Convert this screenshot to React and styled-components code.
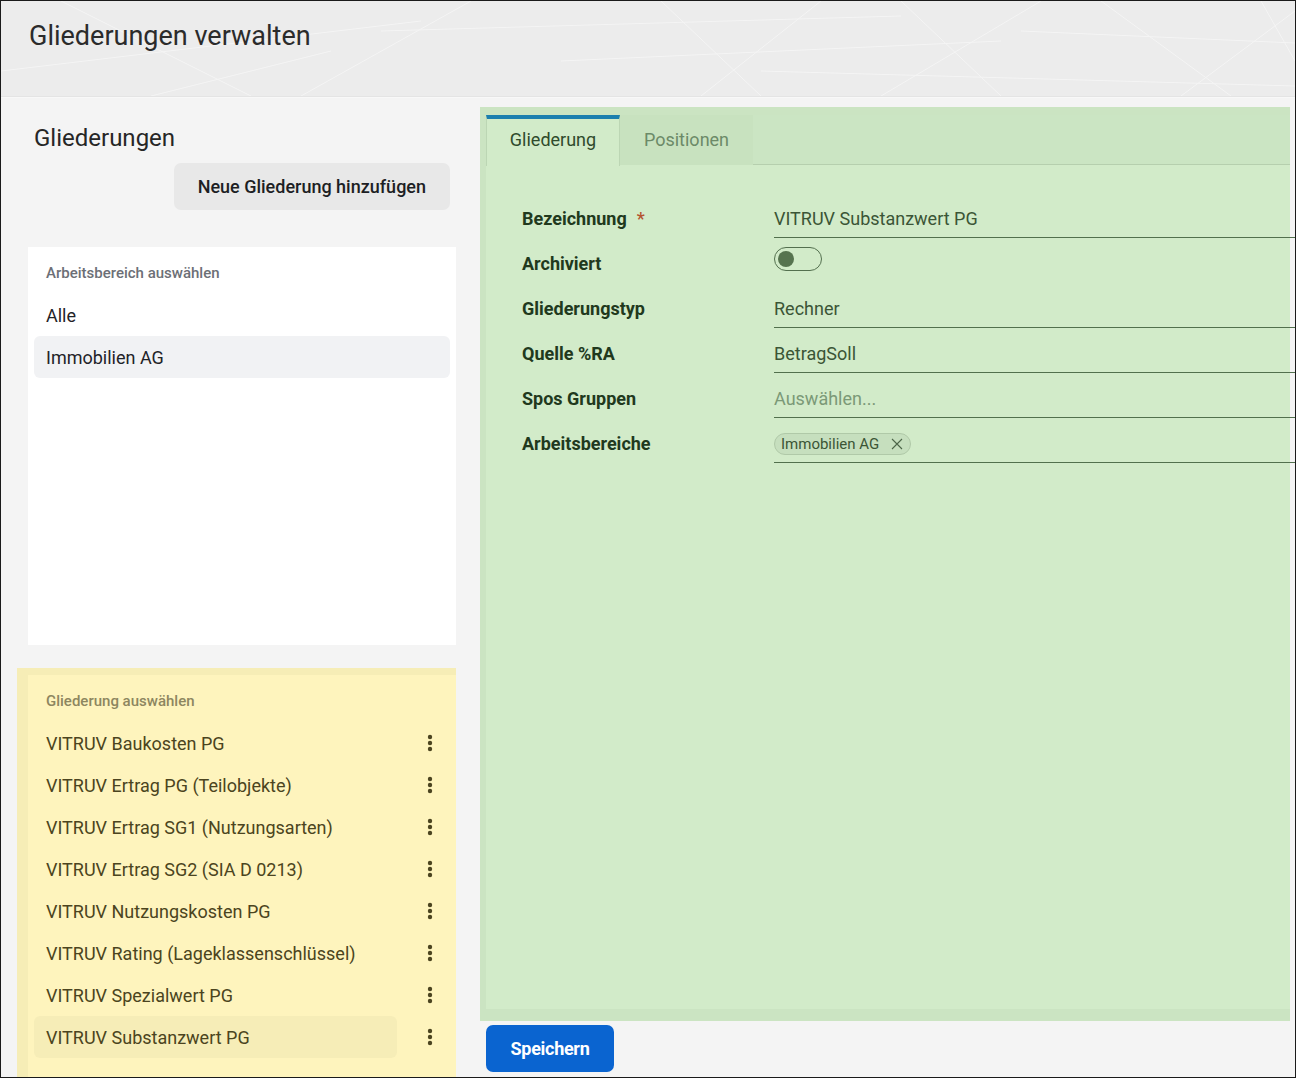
import React from 'react';
import styled, { createGlobalStyle } from 'styled-components';

const GlobalStyle = createGlobalStyle`
  html, body {
    margin: 0;
    padding: 0;
    background: #ffffff;
  }
  * {
    box-sizing: border-box;
  }
  body {
    font-family: Roboto, "Noto Sans", "Liberation Sans", sans-serif;
  }
`;

const workspaces = ['Alle', 'Immobilien AG'];

const outlines = [
  'VITRUV Baukosten PG',
  'VITRUV Ertrag PG (Teilobjekte)',
  'VITRUV Ertrag SG1 (Nutzungsarten)',
  'VITRUV Ertrag SG2 (SIA D 0213)',
  'VITRUV Nutzungskosten PG',
  'VITRUV Rating (Lageklassenschlüssel)',
  'VITRUV Spezialwert PG',
  'VITRUV Substanzwert PG',
];

const HeaderPattern = () => (
  <PatternSvg viewBox="0 0 1294 95" preserveAspectRatio="none">
    <g stroke="#ffffff" strokeWidth="1" opacity="0.45" fill="none">
      <line x1="0" y1="70" x2="420" y2="20" />
      <line x1="60" y1="0" x2="250" y2="95" />
      <line x1="300" y1="95" x2="470" y2="0" />
      <line x1="380" y1="30" x2="900" y2="15" />
      <line x1="660" y1="0" x2="760" y2="95" />
      <line x1="700" y1="95" x2="820" y2="0" />
      <line x1="560" y1="60" x2="1000" y2="40" />
      <line x1="900" y1="0" x2="1000" y2="95" />
      <line x1="880" y1="95" x2="1040" y2="0" />
      <line x1="1020" y1="30" x2="1294" y2="42" />
      <line x1="1100" y1="0" x2="1230" y2="95" />
      <line x1="1180" y1="95" x2="1294" y2="10" />
      <line x1="760" y1="70" x2="1294" y2="85" />
      <line x1="150" y1="95" x2="330" y2="50" />
      <line x1="1260" y1="0" x2="1294" y2="60" />
    </g>
  </PatternSvg>
);

const Kebab = () => (
  <svg width="6" height="18" viewBox="0 0 6 18">
    <circle cx="3" cy="3" r="2.2" fill="#4b4420" />
    <circle cx="3" cy="9" r="2.2" fill="#4b4420" />
    <circle cx="3" cy="15" r="2.2" fill="#4b4420" />
  </svg>
);

const CloseIcon = () => (
  <svg width="12" height="12" viewBox="0 0 12 12">
    <path d="M1 1 L11 11 M11 1 L1 11" stroke="#4c6548" strokeWidth="1.1" fill="none" />
  </svg>
);

const App = () => {
  return (
    <Frame>
      <GlobalStyle />
      <Header>
        <HeaderPattern />
        <Title>Gliederungen verwalten</Title>
      </Header>

      <Body>
        <LeftColumn>
          <SectionTitle>Gliederungen</SectionTitle>
          <ButtonRow>
            <GreyButton>Neue Gliederung hinzufügen</GreyButton>
          </ButtonRow>

          <WhiteCard>
            <CardLabel>Arbeitsbereich auswählen</CardLabel>
            {workspaces.map((w) => (
              <ListItem key={w} selected={w === 'Immobilien AG'}>
                {w}
              </ListItem>
            ))}
          </WhiteCard>

          <YellowWrap>
            <YellowCard>
              <CardLabel tone="yellow">Gliederung auswählen</CardLabel>
              {outlines.map((o) => (
                <OutlineRow key={o}>
                  <OutlineName selected={o === 'VITRUV Substanzwert PG'}>{o}</OutlineName>
                  <KebabButton>
                    <Kebab />
                  </KebabButton>
                </OutlineRow>
              ))}
            </YellowCard>
          </YellowWrap>
        </LeftColumn>

        <RightColumn>
          <GreenWrap>
            <GreenPanel>
              <TabBar>
                <Tab active>Gliederung</Tab>
                <Tab>Positionen</Tab>
              </TabBar>

              <Form>
                <FormRow>
                  <Label>
                    Bezeichnung <Required>*</Required>
                  </Label>
                  <Value underline>VITRUV Substanzwert PG</Value>
                </FormRow>
                <FormRow>
                  <Label>Archiviert</Label>
                  <Value>
                    <Toggle>
                      <Knob />
                    </Toggle>
                  </Value>
                </FormRow>
                <FormRow>
                  <Label>Gliederungstyp</Label>
                  <Value underline>Rechner</Value>
                </FormRow>
                <FormRow>
                  <Label>Quelle %RA</Label>
                  <Value underline>BetragSoll</Value>
                </FormRow>
                <FormRow>
                  <Label>Spos Gruppen</Label>
                  <Value underline placeholder>Auswählen...</Value>
                </FormRow>
                <FormRow>
                  <Label>Arbeitsbereiche</Label>
                  <Value underline>
                    <Chip>
                      Immobilien AG
                      <CloseIcon />
                    </Chip>
                  </Value>
                </FormRow>
              </Form>
            </GreenPanel>
          </GreenWrap>
          <SaveButton>Speichern</SaveButton>
        </RightColumn>
      </Body>
    </Frame>
  );
};

export default App;

const Frame = styled.div`
  width: 1296px;
  height: 1078px;
  border: 1px solid #1a1a1a;
  display: flex;
  flex-direction: column;
  overflow: hidden;
  background: #f4f4f4;
`;

const Header = styled.header`
  position: relative;
  height: 96px;
  flex-shrink: 0;
  background: #ececec;
  border-bottom: 1px solid #e4e4e4;
  padding: 18px 0 0 28px;
  overflow: hidden;
`;

const PatternSvg = styled.svg`
  position: absolute;
  inset: 0;
  width: 100%;
  height: 100%;
`;

const Title = styled.h1`
  position: relative;
  margin: 0;
  font-size: 27px;
  font-weight: 400;
  line-height: 34px;
  color: #2b2b2b;
`;

const Body = styled.div`
  flex: 1;
  display: flex;
  min-height: 0;
  border-top: 1px solid #f8f8f8;
`;

const LeftColumn = styled.div`
  width: 479px;
  flex-shrink: 0;
  padding: 24px 0 0 27px;
  display: flex;
  flex-direction: column;
`;

const SectionTitle = styled.h2`
  margin: 0 0 0 6px;
  font-size: 24px;
  font-weight: 400;
  line-height: 32px;
  color: #262626;
`;

const ButtonRow = styled.div`
  width: 428px;
  display: flex;
  justify-content: flex-end;
  padding-right: 6px;
  margin-top: 9px;
`;

const GreyButton = styled.button`
  height: 47px;
  padding: 0 24px;
  border: none;
  border-radius: 7px;
  background: #e8e8e8;
  font-family: Roboto, "Noto Sans", sans-serif;
  font-size: 18px;
  font-weight: 500;
  color: #1d1f24;
`;

const WhiteCard = styled.div`
  width: 428px;
  height: 398px;
  margin-top: 37px;
  background: #ffffff;
  padding: 16px 6px 0;
`;

const CardLabel = styled.div`
  padding-left: 12px;
  font-size: 15px;
  font-weight: 500;
  line-height: 20px;
  color: ${(p) => (p.tone === 'yellow' ? '#8d8660' : '#6c6f76')};
  margin-bottom: 11px;
`;

const ListItem = styled.div`
  height: 42px;
  display: flex;
  align-items: center;
  padding-left: 12px;
  border-radius: 6px;
  font-size: 18px;
  color: #1f2328;
  background: ${(p) => (p.selected ? '#f1f2f4' : 'transparent')};
`;

const YellowWrap = styled.div`
  width: 439px;
  margin: 23px 0 0 -11px;
  padding: 7px 0 0 11px;
  background: #f6edb6;
  flex: 1;
  display: flex;
`;

const YellowCard = styled.div`
  flex: 1;
  background: #fef4bd;
  padding: 16px 6px 0;
`;

const OutlineRow = styled.div`
  display: flex;
  align-items: center;
  height: 42px;
`;

const OutlineName = styled.div`
  width: 363px;
  height: 42px;
  display: flex;
  align-items: center;
  padding-left: 12px;
  border-radius: 6px;
  font-size: 18px;
  color: #4b4420;
  background: ${(p) => (p.selected ? '#f6edb7' : 'transparent')};
`;

const KebabButton = styled.div`
  flex: 1;
  display: flex;
  justify-content: center;
  align-items: center;
  padding-left: 12px;
`;

const RightColumn = styled.div`
  flex: 1;
  display: flex;
  flex-direction: column;
  padding: 9px 5px 5px 0;
  min-width: 0;
`;

const GreenWrap = styled.div`
  flex: 1;
  display: flex;
  background: #cbe4c2;
  padding: 8px 0 12px 6px;
`;

const GreenPanel = styled.div`
  flex: 1;
  background: #d2ebc9;
  display: flex;
  flex-direction: column;
`;

const TabBar = styled.div`
  display: flex;
  height: 50px;
  background: #cbe5c3;
  border-bottom: 1px solid #b6cfae;
`;

const Tab = styled.div`
  width: ${(p) => (p.active ? '134px' : '133px')};
  height: ${(p) => (p.active ? '51px' : '50px')};
  display: flex;
  align-items: center;
  justify-content: center;
  padding-bottom: ${(p) => (p.active ? '7px' : '6px')};
  font-size: 18px;
  color: ${(p) => (p.active ? '#2f4a2c' : '#6c8a68')};
  background: ${(p) => (p.active ? '#d2ebc9' : '#c8e2bf')};
  border-top: 4px solid ${(p) => (p.active ? '#1b7fae' : 'transparent')};
  border-left: ${(p) => (p.active ? '1px solid #bcd6b4' : 'none')};
  border-right: ${(p) => (p.active ? '1px solid #bcd6b4' : 'none')};
`;

const Form = styled.div`
  padding: 28px 0 0 36px;
`;

const FormRow = styled.div`
  display: flex;
  height: 45px;
`;

const Label = styled.div`
  width: 252px;
  flex-shrink: 0;
  display: flex;
  align-items: flex-end;
  padding-bottom: 9px;
  font-size: 18px;
  font-weight: 700;
  line-height: 21px;
  color: #21391d;
`;

const Required = styled.span`
  margin-left: 10px;
  color: #b4532f;
  font-weight: 500;
`;

const Value = styled.div`
  flex: 1;
  margin-right: -6px;
  display: flex;
  align-items: flex-end;
  padding-bottom: 8px;
  font-size: 18px;
  line-height: 21px;
  color: ${(p) => (p.placeholder ? '#7b9977' : '#3b5536')};
  border-bottom: 1px solid ${(p) => (p.underline ? '#52704d' : 'transparent')};
`;

const Toggle = styled.div`
  align-self: flex-start;
  margin-top: 9px;
  width: 48px;
  height: 24px;
  border: 1.5px solid #54704f;
  border-radius: 12px;
  display: flex;
  align-items: center;
  padding-left: 3px;
`;

const Knob = styled.div`
  width: 16px;
  height: 16px;
  border-radius: 50%;
  background: #56734f;
`;

const Chip = styled.span`
  display: inline-flex;
  align-items: center;
  gap: 12px;
  height: 22px;
  margin-bottom: -1px;
  padding: 0 7px 0 6px;
  border: 1px solid #b0c9a8;
  border-radius: 11px;
  background: #c6dfbe;
  font-size: 15px;
  color: #3b5536;
`;

const SaveButton = styled.button`
  align-self: flex-start;
  margin: 4px 0 0 6px;
  height: 47px;
  width: 128px;
  border: none;
  border-radius: 7px;
  background: #0a64d0;
  color: #ffffff;
  font-family: Roboto, "Noto Sans", sans-serif;
  font-size: 18px;
  font-weight: 700;
  letter-spacing: -0.3px;
`;
